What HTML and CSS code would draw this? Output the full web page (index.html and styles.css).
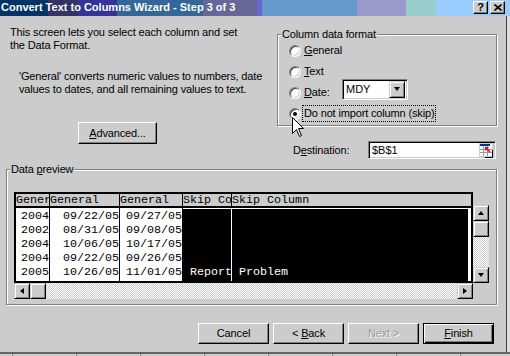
FILE: index.html
```html
<!DOCTYPE html>
<html>
<head>
<meta charset="utf-8">
<link rel="stylesheet" href="styles.css">
</head>
<body>
<div class="window">
  <div class="titlebar">
    <span class="title">Convert Text to Columns Wizard - Step 3 of 3</span>
    <div class="caption-buttons">
      <span class="cap-btn help">?</span>
      <span class="cap-btn close"><svg width="8" height="7" viewBox="0 0 8 7"><path d="M0.5 0.5 L7.5 6.5 M7.5 0.5 L0.5 6.5" stroke="#000" stroke-width="1.6" fill="none"/></svg></span>
    </div>
  </div>
  <div class="frame">
    <div class="content">
      <div class="top">
        <div class="intro">
          <p class="p1">This screen lets you select each column and set<br>the Data Format.</p>
          <p class="p2">'General' converts numeric values to numbers, date<br>values to dates, and all remaining values to text.</p>
          <div class="btn advanced"><span><u>A</u>dvanced...</span></div>
        </div>
        <div class="options">
          <fieldset class="group format">
            <legend><span>Column data format</span></legend>
            <div class="radios">
              <div class="radio-row"><span class="radio"></span><span class="rlabel"><u>G</u>eneral</span></div>
              <div class="radio-row"><span class="radio"></span><span class="rlabel"><u>T</u>ext</span></div>
              <div class="radio-row"><span class="radio"></span><span class="rlabel date-label"><u>D</u>ate:</span>
                <div class="field combo"><span class="combo-text">MDY</span><span class="combo-btn"><span class="tri-down"></span></span></div>
              </div>
              <div class="radio-row"><span class="radio checked"></span><span class="rlabel focus">Do not import column (skip)</span></div>
            </div>
          </fieldset>
          <div class="dest-row">
            <span class="dest-label">D<u>e</u>stination:</span>
            <div class="field dest-field"><span class="dest-text">$B$1</span>
              <svg class="ref-icon" width="15" height="15" viewBox="0 0 15 15">
                <rect x="0" y="0" width="15" height="15" fill="#cccccc"/>
                <rect x="1" y="1" width="12" height="12" fill="#ffffff"/>
                <rect x="1" y="1" width="10" height="2" fill="#003399"/>
                <path d="M1 6.5 H13 M1 9.5 H13 M4.5 3 V13 M8.5 3 V13" stroke="#999999" stroke-width="1"/>
                <path d="M13.5 7 V14.5 H6" stroke="#000000" stroke-width="1" fill="none"/>
                <polygon points="6,4 10,4 6,8" fill="#ff0000"/>
                <path d="M7 5 L11 9" stroke="#ff0000" stroke-width="1.6"/>
              </svg>
            </div>
          </div>
        </div>
      </div>
      <fieldset class="group preview">
        <legend><span>Data <u>p</u>review</span></legend>
        <div class="preview-grid">
          <div class="table">
            <div class="thead">
              <div class="th">General</div>
              <div class="th">General</div>
              <div class="th">General</div>
              <div class="th">Skip Column</div>
              <div class="th last">Skip Column</div>
            </div>
            <div class="tbody">
              <div class="col"><div>2004</div><div>2002</div><div>2004</div><div>2004</div><div>2005</div></div>
              <div class="col"><div>09/22/05</div><div>08/31/05</div><div>10/06/05</div><div>09/22/05</div><div>10/26/05</div></div>
              <div class="col"><div>09/27/05</div><div>09/08/05</div><div>10/17/05</div><div>09/26/05</div><div>11/01/05</div></div>
              <div class="col sel"><div></div><div></div><div></div><div></div><div> Report</div></div>
              <div class="col sel last"><div></div><div></div><div></div><div></div><div> Problem</div></div>
            </div>
          </div>
          <div class="vscroll">
            <span class="sb-btn"><span class="tri-up"></span></span>
            <span class="sb-btn"></span>
            <span class="track"></span>
            <span class="sb-btn"><span class="tri-down"></span></span>
          </div>
          <div class="hscroll">
            <span class="sb-btn"><span class="tri-left"></span></span>
            <span class="sb-btn"></span>
            <span class="track"></span>
            <span class="sb-btn"><span class="tri-right"></span></span>
          </div>
        </div>
      </fieldset>
      <div class="buttons">
        <div class="btn"><span>Cancel</span></div>
        <div class="btn"><span>&lt; <u>B</u>ack</span></div>
        <div class="btn disabled"><span>Next &gt;</span></div>
        <div class="btn default"><span><u>F</u>inish</span></div>
      </div>
    </div>
    <div class="right-edge"></div>
  </div>
  <div class="bottom-edge"></div>
  <svg class="cursor" width="13" height="21" viewBox="0 0 13 21">
    <path d="M0.5 0.5 L0.5 16.5 L4.5 12.5 L7.5 19.5 L9.5 18.5 L6.5 11.5 L11.5 11.5 Z" fill="#ffffff" stroke="#000000" stroke-width="1" stroke-linejoin="miter"/>
  </svg>
</div>
</body>
</html>
```
FILE: styles.css
```css
html, body {
  margin: 0;
  padding: 0;
  background: #cccccc;
}

.window {
  width: 510px;
  height: 356px;
  position: relative;
  overflow: hidden;
  background: #cccccc;
  font-family: "Liberation Sans", Arial, sans-serif;
  font-size: 11px;
  line-height: 13px;
  letter-spacing: -0.15px;
  color: #000;
}

u {
  text-decoration: underline;
  text-underline-offset: 1px;
}

/* ---------- title bar ---------- */
.titlebar {
  height: 16px;
  display: flex;
  justify-content: space-between;
  align-items: flex-start;
  background: linear-gradient(to right,
    #003366 0 48px, #333366 48px 78px, #333399 78px 117px,
    #336699 117px 203px, #666699 203px 257px, #6666cc 257px 262px,
    #6699cc 262px 357px, #9999cc 357px 406px, #99cccc 406px 436px,
    #99ccff 436px 510px);
}

.title {
  color: #fff;
  font-weight: bold;
  line-height: 15px;
  padding-left: 1px;
  letter-spacing: 0;
}

.caption-buttons {
  display: flex;
  gap: 2px;
  padding: 1px 5px 0 0;
}

.cap-btn {
  width: 15px;
  height: 13px;
  box-sizing: border-box;
  background: #cccccc;
  border: 1px solid;
  border-color: #fff #000 #000 #fff;
  box-shadow: inset -1px -1px 0 #808080;
  display: flex;
  align-items: center;
  justify-content: center;
  font-weight: bold;
  font-size: 11px;
  line-height: 11px;
  letter-spacing: 0;
}

/* ---------- frame ---------- */
.frame {
  display: flex;
  height: 336px;
}

.content {
  width: 506px;
  display: flex;
  flex-direction: column;
}

.right-edge {
  width: 3px;
  border-left: 1px solid #404040;
  background: #dddddd;
}

.bottom-edge {
  height: 2px;
  border-top: 2px solid #666666;
  background: repeating-linear-gradient(to right, #cccccc 0 12px, #888888 12px 13px, #cccccc 13px 64px);
}

/* ---------- top section ---------- */
.top {
  height: 147px;
  display: flex;
}

.intro {
  width: 267px;
  padding: 10px 0 0 10px;
}

.intro p {
  margin: 0;
}

.p2 {
  margin: 18px 0 0 9px !important;
}

.btn {
  box-sizing: border-box;
  height: 21px;
  width: 71px;
  background: #cccccc;
  border: 1px solid;
  border-color: #fff #000 #000 #fff;
  box-shadow: inset -1px -1px 0 #808080;
  display: flex;
  align-items: center;
  justify-content: center;
}

.advanced {
  margin: 26px 0 0 68px;
  width: 79px;
  height: 22px;
}

.options {
  flex: 1;
  padding-top: 12px;
}

/* group boxes */
.group {
  margin: 0;
  padding: 0;
  border: 1px solid #808080;
  box-shadow: inset 1px 1px 0 #fff, 1px 1px 0 #fff;
  min-width: 0;
}

.group legend {
  padding: 0 1px;
  margin-left: 3px;
  line-height: 13px;
  background: #cccccc;
}

.format {
  width: 220px;
  box-sizing: border-box;
  padding: 0 0 1px 11px;
}

.format legend {
  margin-left: -8px;
}

.radios {
  margin-top: -1px;
}

.radio-row {
  height: 21px;
  display: flex;
  align-items: center;
}

.radio {
  width: 12px;
  height: 12px;
  box-sizing: border-box;
  border-radius: 50%;
  background: #fff;
  border: 1px solid;
  border-color: #808080 #fff #fff #808080;
  box-shadow: inset 1px 1px 0 #404040, inset -1px -1px 0 #cccccc;
  position: relative;
  flex: none;
}

.radio.checked::after {
  content: "";
  position: absolute;
  left: 3px;
  top: 3px;
  width: 4px;
  height: 4px;
  border-radius: 50%;
  background: #000;
}

.rlabel {
  margin-left: 3px;
}

.date-label {
  width: 38px;
}

.rlabel.focus {
  margin-left: 1px;
  border: 1px dotted #000;
  padding: 1px 1px;
}

.field {
  box-sizing: border-box;
  background: #fff;
  border: 1px solid;
  border-color: #808080 #fff #fff #808080;
  box-shadow: inset 1px 1px 0 #000, inset -1px -1px 0 #cccccc;
  display: flex;
  align-items: center;
}

.combo {
  width: 66px;
  height: 21px;
  margin-bottom: 7px;
  padding: 2px 2px 2px 3px;
}

.combo-text {
  flex: 1;
  letter-spacing: 0;
}

.combo-btn {
  width: 16px;
  height: 17px;
  box-sizing: border-box;
  background: #cccccc;
  border: 1px solid;
  border-color: #cccccc #000 #000 #cccccc;
  box-shadow: inset 1px 1px 0 #fff, inset -1px -1px 0 #808080;
  display: flex;
  align-items: center;
  justify-content: center;
}

.tri-down, .tri-up, .tri-left, .tri-right {
  width: 0;
  height: 0;
  border-style: solid;
  border-color: transparent;
}

.tri-down { border-width: 4px 3.5px 0 3.5px; border-top-color: #000; }
.tri-up { border-width: 0 3.5px 4px 3.5px; border-bottom-color: #000; }
.tri-left { border-width: 3.5px 4px 3.5px 0; border-right-color: #000; }
.tri-right { border-width: 3.5px 0 3.5px 4px; border-left-color: #000; }

.dest-row {
  margin-top: 15px;
  display: flex;
  align-items: center;
}

.dest-label {
  margin-left: 16px;
  width: 75px;
}

.dest-field {
  width: 128px;
  height: 18px;
  padding: 1px 2px 1px 3px;
}

.dest-text {
  flex: 1;
  letter-spacing: 0;
}

.ref-icon {
  display: block;
  margin-right: -1px;
}

/* ---------- data preview ---------- */
.preview {
  margin-left: 6px;
  width: 491px;
  box-sizing: border-box;
}

.preview-grid {
  margin: 16px 0 0 7px;
  padding-bottom: 5px;
  display: grid;
  grid-template-columns: 459px 16px;
  grid-template-rows: 91px 16px;
}

.table {
  box-sizing: border-box;
  height: 91px;
  border: 2px solid #000;
  background: #fff;
  display: flex;
  flex-direction: column;
  font-family: "Liberation Mono", "Courier New", monospace;
  font-size: 11.7px;
  letter-spacing: 0;
  overflow: hidden;
}

.thead {
  display: grid;
  grid-template-columns: 34px 70px 63px 49px 1fr;
  height: 14px;
  box-sizing: border-box;
  border-bottom: 2px solid #000;
  background: #cccccc;
}

.th {
  border-right: 1px solid #000;
  white-space: nowrap;
  overflow: hidden;
  line-height: 13px;
}

.th.last {
  border-right: none;
}

.tbody {
  flex: 1;
  display: grid;
  grid-template-columns: 34px 70px 63px 49px 236px;
}

.col {
  border-right: 1px solid #000;
  padding-top: 1px;
  text-align: right;
  overflow: hidden;
}

.col div {
  height: 14px;
  line-height: 14px;
  white-space: pre;
}

.col.sel {
  background: #000;
  color: #fff;
  border-right-color: #fff;
  box-shadow: inset 0 1px 0 #fff;
  text-align: left;
}

.col.sel.last {
  border-right: none;
}

.sb-btn {
  box-sizing: border-box;
  width: 16px;
  height: 16px;
  flex: none;
  background: #cccccc;
  border: 1px solid;
  border-color: #cccccc #000 #000 #cccccc;
  box-shadow: inset 1px 1px 0 #fff, inset -1px -1px 0 #808080;
  display: flex;
  align-items: center;
  justify-content: center;
}

.track {
  flex: 1;
  background-image: repeating-conic-gradient(#ffffff 0 25%, #cccccc 0 50%);
  background-size: 2px 2px;
}

.vscroll {
  margin-top: 13px;
  display: flex;
  flex-direction: column;
}

.hscroll {
  display: flex;
}

/* ---------- bottom buttons ---------- */
.buttons {
  margin: 18px 0 0 198px;
  display: flex;
  gap: 4px;
}

.btn.default {
  border-color: #000;
  box-shadow: inset 1px 1px 0 #fff, inset -1px -1px 0 #000, inset -2px -2px 0 #808080;
}

.btn.disabled {
  color: #999999;
  text-shadow: 1px 1px 0 #fff;
}

/* ---------- mouse pointer (overlay) ---------- */
.cursor {
  position: absolute;
  left: 292px;
  top: 117px;
}
```
